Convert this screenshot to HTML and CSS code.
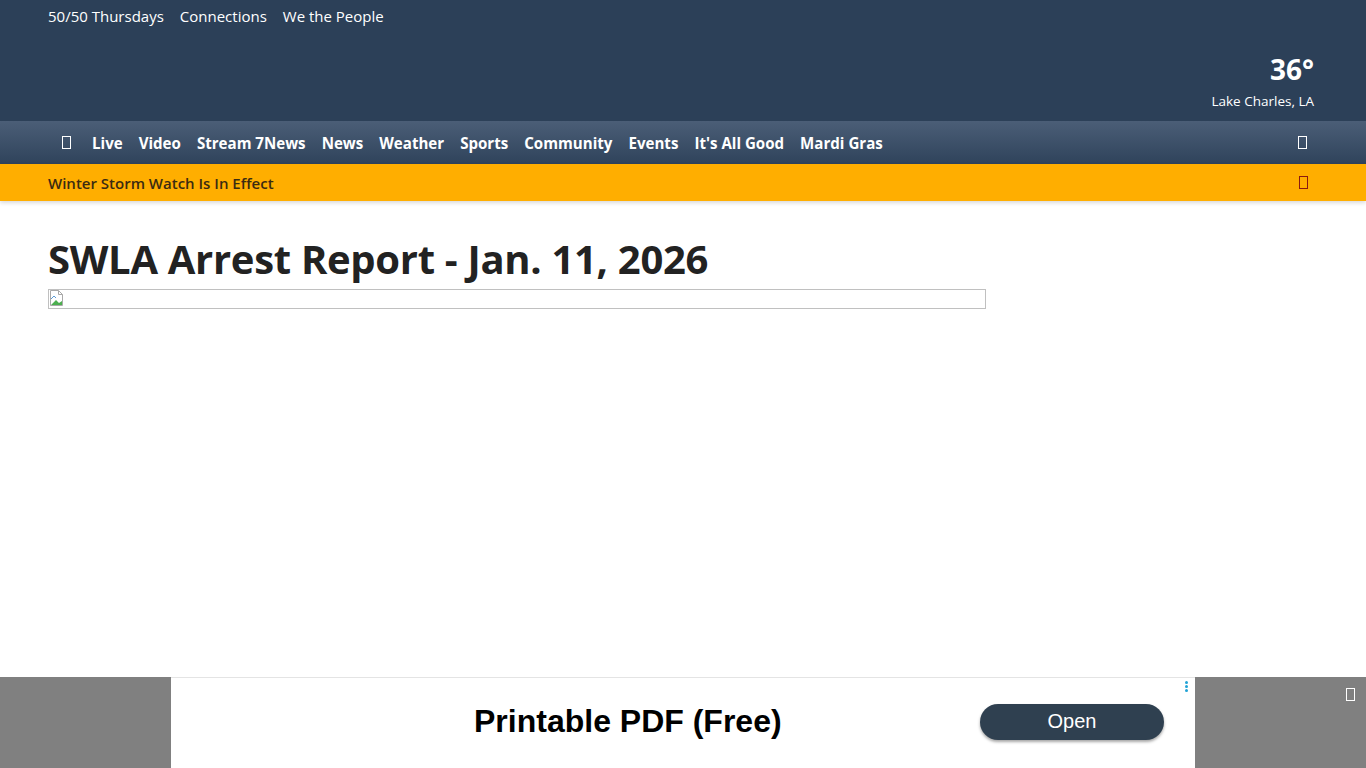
FILE: index.html
```html
<!DOCTYPE html>
<html lang="en">
<head>
  <meta charset="UTF-8" />
  <title>SWLA Arrest Report - Jan. 11, 2026</title>
  <link rel="stylesheet" href="styles.css">
</head>
<body>

  <header class="top">
    <div class="top-links">
      <a href="#">50/50 Thursdays</a>
      <a href="#">Connections</a>
      <a href="#">We the People</a>
    </div>
    <div class="weather">
      <div class="temp">36°</div>
      <div class="city">Lake Charles, LA</div>
    </div>
  </header>

  <nav class="nav">
    <span class="tofu"></span>
    <a href="#">Live</a>
    <a href="#">Video</a>
    <a href="#">Stream 7News</a>
    <a href="#">News</a>
    <a href="#">Weather</a>
    <a href="#">Sports</a>
    <a href="#">Community</a>
    <a href="#">Events</a>
    <a href="#">It's All Good</a>
    <a href="#">Mardi Gras</a>
    <span class="tofu tofu-right"></span>
  </nav>

  <div class="alert">
    <span>Winter Storm Watch Is In Effect</span>
    <span class="tofu tofu-alert"></span>
  </div>

  <main class="article">
    <h1>SWLA Arrest Report - Jan. 11, 2026</h1>
    <div class="broken-img">
      <svg width="16" height="16" viewBox="0 0 16 16">
        <path d="M1.5 0.5h8l4 4v11h-12z" fill="#fff" stroke="#a9a9a9"/>
        <path d="M9.5 0.5v4h4" fill="none" stroke="#a9a9a9"/>
        <path d="M2 15l5-5 3 3 3-2v4z" fill="#4caf50"/>
        <path d="M2 9l3-3 2 2" fill="none" stroke="#5b9bd5"/>
      </svg>
    </div>
  </main>

  <div class="ad">
    <div class="ad-box">
      <div class="ad-title">Printable PDF (Free)</div>
      <button class="ad-btn">Open</button>
      <span class="ad-dots"><i></i><i></i><i></i></span>
    </div>
    <span class="tofu tofu-close"></span>
  </div>

</body>
</html>
```

FILE: styles.css
```css
body {
  margin: 0;
  font-family: "Open Sans", sans-serif;
  background: #fff;
  color: #222;
}
a {
  text-decoration: none;
  color: inherit;
}
.top {
  background: #2c4058;
  height: 121px;
  padding: 0 52px 0 48px;
  display: flex;
  justify-content: space-between;
  color: #fff;
}
.top-links {
  display: flex;
  gap: 16px;
  padding-top: 6px;
  font-size: 15px;
  height: 22px;
}
.weather {
  text-align: right;
  padding-top: 50px;
}
.temp {
  font-size: 28px;
  font-weight: 700;
  line-height: 38px;
}
.city {
  font-size: 13.5px;
  margin-top: 4px;
  line-height: 18px;
}
.nav {
  height: 43px;
  background: linear-gradient(#4b5e77, #2f435b);
  display: flex;
  align-items: center;
  gap: 16px;
  padding: 0 59px 0 62px;
  color: #fff;
  font-weight: 700;
  font-size: 15.1px;
}
.tofu {
  display: inline-block;
  width: 7px;
  height: 11px;
  border: 1px solid #fff;
  margin-right: 5px;
}
.tofu-right {
  margin: 0 0 0 auto;
}
.alert {
  height: 37px;
  background: #ffae00;
  color: #3b2b12;
  display: flex;
  align-items: center;
  justify-content: space-between;
  padding: 0 58px 0 48px;
  font-size: 15px;
  font-weight: 600;
  box-shadow: 0 2px 4px rgba(0,0,0,0.15);
}
.tofu-alert {
  border-color: #8b1a10;
  margin: 0;
}
.article {
  padding: 32px 48px 0;
}
.article h1 {
  margin: 0 0 4px;
  font-size: 40px;
  font-weight: 700;
  letter-spacing: -0.3px;
  line-height: 52px;
  color: #222;
}
.broken-img {
  width: 936px;
  height: 18px;
  border: 1px solid #c0c0c0;
}
.broken-img svg {
  display: block;
}
.ad {
  position: fixed;
  left: 0;
  right: 0;
  bottom: 0;
  height: 91px;
  background: #808080;
  display: flex;
  justify-content: center;
}
.ad-box {
  position: relative;
  width: 1024px;
  background: #fff;
  border-top: 1px solid #e4e4e4;
  display: flex;
  align-items: center;
  padding-bottom: 3px;
}
.ad-title {
  font-family: "Liberation Sans", Arial, sans-serif;
  font-weight: 700;
  font-size: 32px;
  color: #000;
  margin-left: 303px;
}
.ad-btn {
  margin-left: auto;
  margin-right: 31px;
  width: 184px;
  height: 36px;
  border: none;
  border-radius: 18px;
  background: #2f4050;
  color: #fff;
  font-family: "Liberation Sans", Arial, sans-serif;
  font-size: 20px;
  box-shadow: 0 2px 3px rgba(0,0,0,0.35);
}
.ad-dots {
  position: absolute;
  right: 7px;
  top: 3px;
  display: flex;
  flex-direction: column;
  gap: 1px;
}
.ad-dots i {
  width: 3px;
  height: 3px;
  border-radius: 50%;
  background: #21a3d6;
}
.tofu-close {
  position: absolute;
  right: 11px;
  top: 11px;
  width: 7px;
  height: 11px;
  border-color: #fff;
  margin: 0;
}
```
